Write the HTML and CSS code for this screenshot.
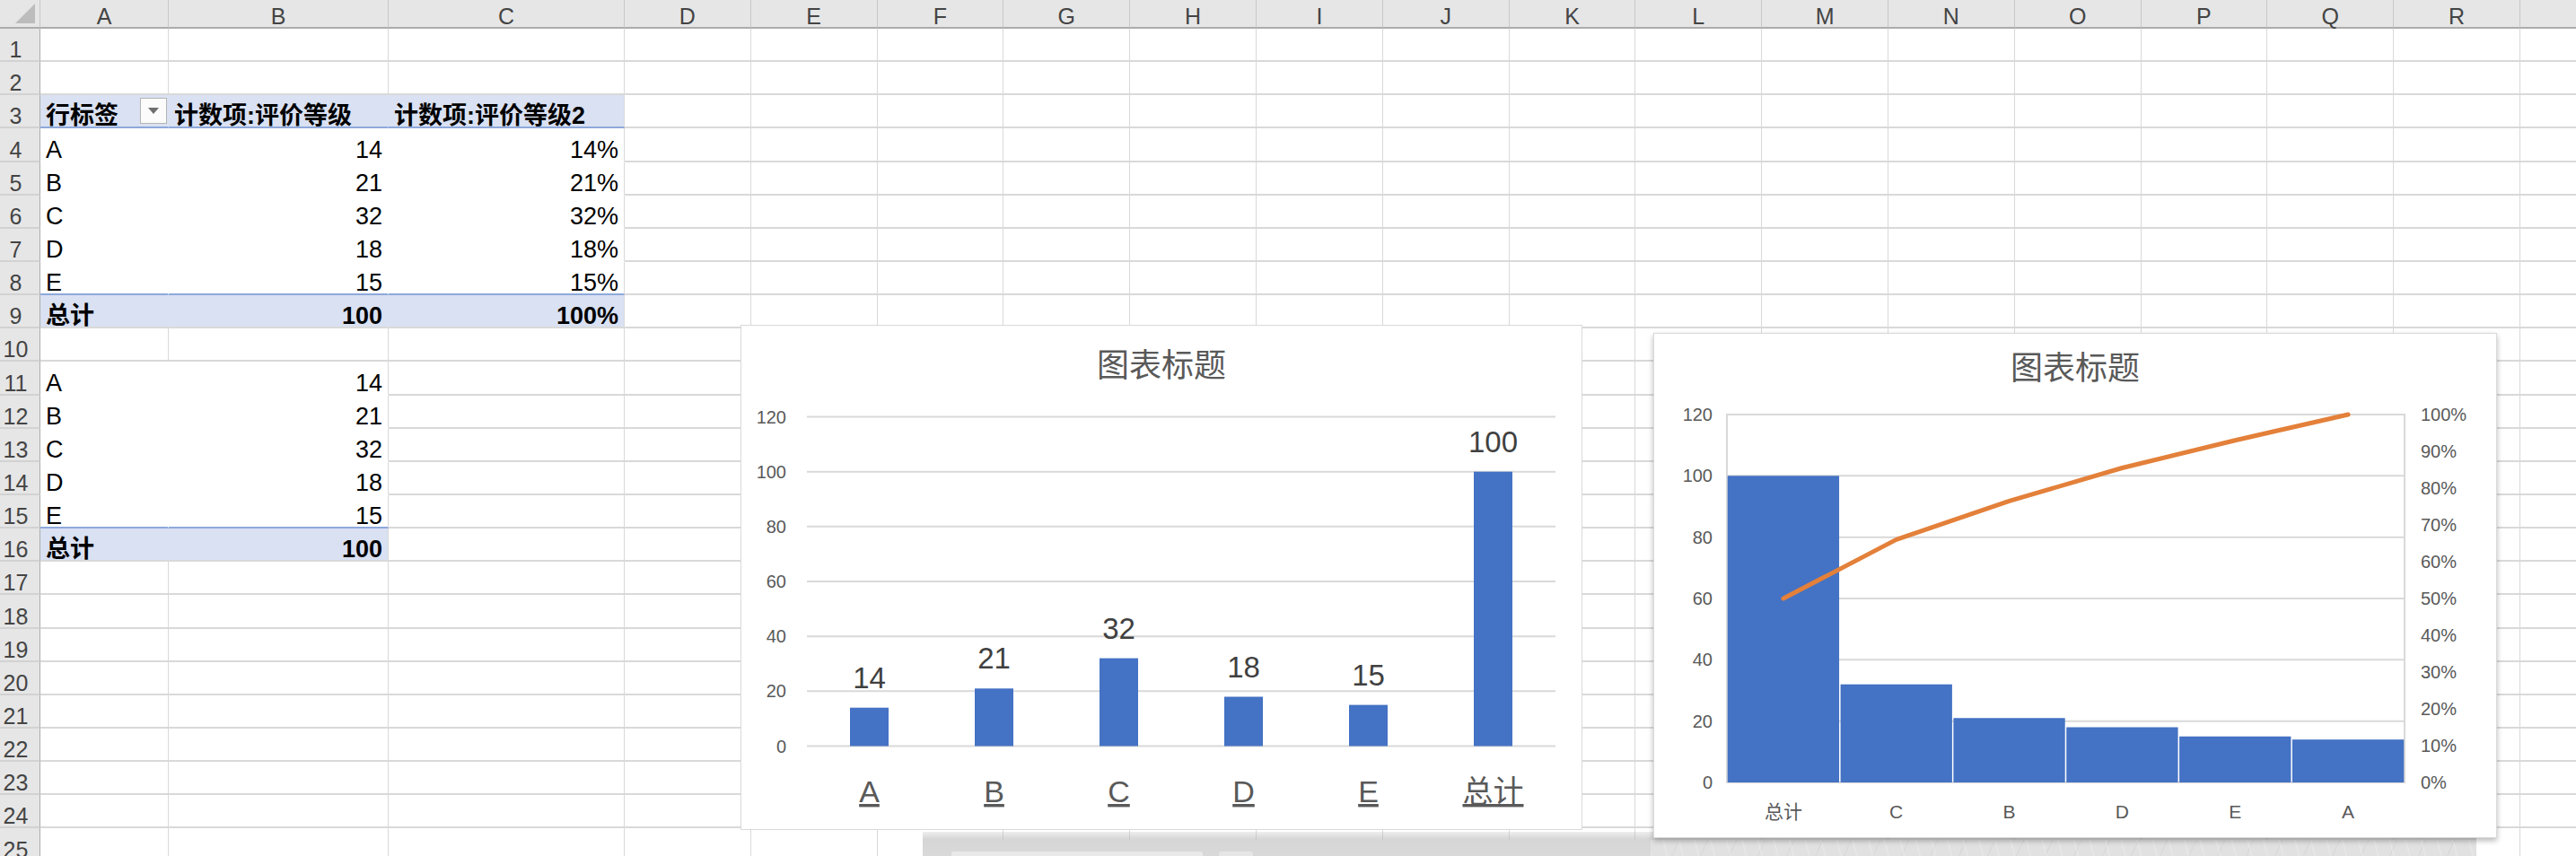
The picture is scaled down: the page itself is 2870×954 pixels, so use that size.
FILE: index.html
```html
<!DOCTYPE html>
<html lang="zh-CN">
<head>
    <meta charset="UTF-8">
    <meta name="viewport" content="width=device-width, initial-scale=1.0">
    <title>评价等级 - 帕累托图</title>
    <link rel="stylesheet" href="styles.css">
</head>
<body>
<div class="sheet">
    <div class="grid" id="grid"></div>

    <!-- chart 1: plain column chart with the total -->
    <div class="chart chart-bar">
        <svg width="938" height="563" viewBox="0 0 938 563">
            <text class="c-title" x="469" y="58">图表标题</text>
            <g class="c-grid">
                <line x1="74" x2="908" y1="102.5" y2="102.5"/>
                <line x1="74" x2="908" y1="163.7" y2="163.7"/>
                <line x1="74" x2="908" y1="224.8" y2="224.8"/>
                <line x1="74" x2="908" y1="286" y2="286"/>
                <line x1="74" x2="908" y1="347.2" y2="347.2"/>
                <line x1="74" x2="908" y1="408.3" y2="408.3"/>
                <line x1="74" x2="908" y1="469.5" y2="469.5"/>
            </g>
            <g class="c-axis y-left">
                <text x="51" y="109.5">120</text>
                <text x="51" y="170.7">100</text>
                <text x="51" y="231.8">80</text>
                <text x="51" y="293">60</text>
                <text x="51" y="354.2">40</text>
                <text x="51" y="415.3">20</text>
                <text x="51" y="476.5">0</text>
            </g>
            <g class="c-bars">
                <rect x="122" y="426.7" width="43" height="42.8"/>
                <rect x="261" y="405.3" width="43" height="64.2"/>
                <rect x="400" y="371.6" width="43" height="97.9"/>
                <rect x="539" y="414.5" width="43" height="55"/>
                <rect x="678" y="423.6" width="43" height="45.9"/>
                <rect x="817" y="163.7" width="43" height="305.8"/>
            </g>
            <g class="c-label">
                <text x="143.5" y="404.7">14</text>
                <text x="282.5" y="383.3">21</text>
                <text x="421.5" y="349.6">32</text>
                <text x="560.5" y="392.5">18</text>
                <text x="699.5" y="401.6">15</text>
                <text x="838.5" y="141.7">100</text>
            </g>
            <g class="c-cat">
                <text x="143.5" y="532">A</text>
                <text x="282.5" y="532">B</text>
                <text x="421.5" y="532">C</text>
                <text x="560.5" y="532">D</text>
                <text x="699.5" y="532">E</text>
                <text x="838.5" y="532">总计</text>
            </g>
        </svg>
    </div>

    <!-- chart 2: pareto, sorted bars + cumulative line -->
    <div class="chart chart-pareto">
        <svg width="940" height="563" viewBox="0 0 940 563">
            <text class="c-title" x="470" y="52">图表标题</text>
            <g class="c-grid">
                <line x1="82" x2="837" y1="159.3" y2="159.3"/>
                <line x1="82" x2="837" y1="227.7" y2="227.7"/>
                <line x1="82" x2="837" y1="296" y2="296"/>
                <line x1="82" x2="837" y1="364.3" y2="364.3"/>
                <line x1="82" x2="837" y1="432.7" y2="432.7"/>
                <rect x="82" y="91" width="755" height="410"/>
            </g>
            <g class="c-axis y-left">
                <text x="66" y="98">120</text>
                <text x="66" y="166.3">100</text>
                <text x="66" y="234.7">80</text>
                <text x="66" y="303">60</text>
                <text x="66" y="371.3">40</text>
                <text x="66" y="439.7">20</text>
                <text x="66" y="508">0</text>
            </g>
            <g class="c-axis y-right">
                <text x="855" y="98">100%</text>
                <text x="855" y="139">90%</text>
                <text x="855" y="180">80%</text>
                <text x="855" y="221">70%</text>
                <text x="855" y="262">60%</text>
                <text x="855" y="303">50%</text>
                <text x="855" y="344">40%</text>
                <text x="855" y="385">30%</text>
                <text x="855" y="426">20%</text>
                <text x="855" y="467">10%</text>
                <text x="855" y="508">0%</text>
            </g>
            <g class="c-bars">
                <rect x="82.75" y="159.3" width="124.3" height="341.7"/>
                <rect x="208.6" y="391.7" width="124.3" height="109.3"/>
                <rect x="334.4" y="429.25" width="124.3" height="71.75"/>
                <rect x="460.25" y="439.5" width="124.3" height="61.5"/>
                <rect x="586.1" y="449.75" width="124.3" height="51.25"/>
                <rect x="711.9" y="453.2" width="124.3" height="47.8"/>
            </g>
            <polyline class="c-line" points="144.9,296 270.7,230.4 396.6,187.4 522.4,150.5 648.3,119.7 774.1,91"/>
            <g class="c-axis x-cat">
                <text x="144.9" y="541">总计</text>
                <text x="270.7" y="541">C</text>
                <text x="396.6" y="541">B</text>
                <text x="522.4" y="541">D</text>
                <text x="648.3" y="541">E</text>
                <text x="774.1" y="541">A</text>
            </g>
        </svg>
    </div>

    <div class="dialog">
        <div class="dlg-field"></div>
        <div class="dlg-btn"></div>
        <div class="dlg-frost"></div>
    </div>
</div>

<script>
    // the last column (S) is only a sliver at the window edge, its letter is off screen
    const COLS = 'ABCDEFGHIJKLMNOPQR'.split('').concat(['']);
    const ROWS = 25;

    // row number -> [row class, cell values from column A]
    const pivot = {
        3:  ['pv-head', ['行标签', '计数项:评价等级', '计数项:评价等级2']],
        4:  ['pv', ['A', 14, '14%']],
        5:  ['pv', ['B', 21, '21%']],
        6:  ['pv', ['C', 32, '32%']],
        7:  ['pv', ['D', 18, '18%']],
        8:  ['pv pv-last', ['E', 15, '15%']],
        9:  ['pv-total', ['总计', 100, '100%']],
        11: ['pv', ['A', 14]],
        12: ['pv', ['B', 21]],
        13: ['pv', ['C', 32]],
        14: ['pv', ['D', 18]],
        15: ['pv pv-last', ['E', 15]],
        16: ['pv-total', ['总计', 100]]
    };

    const grid = document.getElementById('grid');

    function add(cls, text) {
        const el = document.createElement('div');
        el.className = cls;
        if (text !== undefined) el.textContent = text;
        grid.appendChild(el);
        return el;
    }

    add('corner');
    COLS.forEach(c => add('colhead', c));

    for (let r = 1; r <= ROWS; r++) {
        add('rowhead', r);
        const row = pivot[r];
        COLS.forEach((c, i) => {
            if (!row || i >= row[1].length) {
                add('cell');
                return;
            }
            const value = row[1][i];
            let cls = 'cell ' + row[0];
            if (i === row[1].length - 1) cls += ' edge';
            if (r !== 3 && i > 0) cls += ' num';
            const cell = add(cls, value);
            if (r === 3 && i === 0) {
                const btn = document.createElement('span');
                btn.className = 'filter';
                cell.appendChild(btn);
            }
        });
    }
</script>
</body>
</html>
```

FILE: styles.css
```css
body {
    margin: 0;
    background: #fff;
    font-family: "Liberation Sans", "Noto Sans CJK SC", sans-serif;
    color: #000;
}
.sheet {
    position: relative;
    width: 2870px;
    height: 954px;
    overflow: hidden;
}
.grid {
    display: grid;
    grid-template-columns: 45px 143px 245px 263px repeat(15, 140.8px) 140px;
    grid-template-rows: 32px;
    grid-auto-rows: 37.15px;
}
.grid > div {
    box-sizing: border-box;
}
.corner {
    background: #e6e6e6;
    border-right: 1px solid #c8c8c8;
    border-bottom: 2px solid #acacac;
    display: flex;
    justify-content: flex-end;
    align-items: flex-end;
    padding: 0 5px 4px 0;
}
.corner::after {
    content: '';
    width: 22px;
    height: 22px;
    background: #bcbcbc;
    clip-path: polygon(100% 0, 100% 100%, 0 100%);
}
.colhead {
    background: #e6e6e6;
    border-right: 1px solid #c8c8c8;
    border-bottom: 2px solid #acacac;
    color: #444;
    font-size: 25px;
    line-height: 24px;
    display: flex;
    justify-content: center;
    align-items: flex-end;
}
.rowhead {
    background: #e6e6e6;
    border-right: 1px solid #acacac;
    border-bottom: 2px solid #d2d2d2;
    color: #444;
    font-size: 25px;
    line-height: 24px;
    display: flex;
    justify-content: center;
    align-items: flex-end;
    padding-right: 9px;
}
.cell {
    border-right: 1px solid #d9d9d9;
    border-bottom: 2px solid #d9d9d9;
    font-size: 27px;
    line-height: 24px;
    padding: 0 6px;
    display: flex;
    align-items: flex-end;
    white-space: nowrap;
}
.num {
    justify-content: flex-end;
}
.pv {
    border-right-color: transparent;
    border-bottom-color: transparent;
}
.pv-head {
    background: #d9e1f2;
    font-weight: bold;
    border-right-color: transparent;
    border-bottom-color: #8ea9db;
}
.pv-total {
    background: #d9e1f2;
    font-weight: bold;
    border-right-color: transparent;
}
.pv-last {
    border-bottom-color: #8ea9db;
}
.edge {
    border-right-color: #d9d9d9;
}
.filter {
    width: 30px;
    height: 29px;
    margin-left: auto;
    margin-right: -5px;
    align-self: center;
    background: #fbfbfb;
    border: 1px solid #b4b4b4;
    box-sizing: border-box;
    display: flex;
    justify-content: center;
    align-items: center;
}
.filter::after {
    content: '';
    border-left: 6px solid transparent;
    border-right: 6px solid transparent;
    border-top: 7px solid #6e6e6e;
}

/* charts */
.chart {
    position: absolute;
    background: #fff;
    border: 1px solid #d9d9d9;
    box-sizing: border-box;
    font-family: "Liberation Sans", "Noto Sans CJK SC", sans-serif;
}
.chart svg {
    display: block;
    margin: -1px;
}
.chart-bar {
    left: 825px;
    top: 362px;
    width: 938px;
    height: 563px;
}
.chart-pareto {
    left: 1842px;
    top: 371px;
    width: 940px;
    height: 563px;
    z-index: 3;
    box-shadow: 0 3px 6px rgba(0, 0, 0, 0.28);
}
.c-title {
    font-size: 36px;
    fill: #595959;
    text-anchor: middle;
}
.c-grid line,
.c-grid rect {
    stroke: #d9d9d9;
    stroke-width: 2;
    fill: none;
}
.c-axis text {
    font-size: 20px;
    fill: #595959;
}
.y-left text {
    text-anchor: end;
}
.x-cat text {
    text-anchor: middle;
    font-size: 21px;
}
.c-bars rect {
    fill: #4472c4;
}
.c-label text {
    font-size: 33px;
    fill: #404040;
    text-anchor: middle;
}
.c-cat text {
    font-size: 34px;
    fill: #595959;
    text-anchor: middle;
    text-decoration: underline;
}
.c-line {
    fill: none;
    stroke: #e3803a;
    stroke-width: 5;
    stroke-linecap: round;
    stroke-linejoin: round;
}

/* dialog peeking in at the bottom */
.dialog {
    position: absolute;
    left: 1028px;
    top: 927px;
    width: 1731px;
    height: 27px;
    z-index: 2;
    box-sizing: border-box;
    padding-left: 32px;
    display: flex;
    align-items: flex-end;
    gap: 18px;
    background: linear-gradient(rgba(200, 200, 200, 0.3), rgba(175, 175, 175, 0.5) 8px, #d6d6d6 9px, #d9d9d9);
}
.dlg-field {
    width: 280px;
    height: 5px;
    background: #e9e9e9;
    border-radius: 3px 3px 0 0;
}
.dlg-btn {
    width: 38px;
    height: 5px;
    background: #e6e6e6;
    border-radius: 3px 3px 0 0;
}
.dlg-frost {
    margin-left: auto;
    width: 920px;
    align-self: stretch;
    margin-top: 9px;
    background:
        repeating-linear-gradient(75deg, rgba(255, 255, 255, 0.18) 0 2px, transparent 2px 17px),
        repeating-linear-gradient(-65deg, rgba(150, 150, 150, 0.12) 0 1px, transparent 1px 29px),
        #e1e1e1;
}
```
